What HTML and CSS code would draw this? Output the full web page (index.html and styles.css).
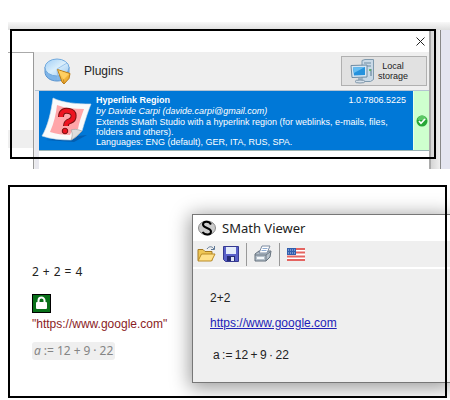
FILE: index.html
```html
<!DOCTYPE html>
<html lang="en">
<head>
    <meta charset="UTF-8">
    <meta name="viewport" content="width=device-width, initial-scale=1.0">
    <title>Hyperlink Region - SMath Studio</title>
    <link rel="stylesheet" href="styles.css">
</head>
<body>
    <!-- Plugins manager -->
    <section class="plugins">
        <div class="plugins-shadow"></div>
        <div class="plugins-body">
            <div class="manager">
                <div class="manager-title">
                    <button class="close" type="button" aria-label="Close">
                        <svg width="9" height="9" viewBox="0 0 9 9"><path d="M.5.5l8 8M8.5.5l-8 8" stroke="#222" fill="none"/></svg>
                    </button>
                </div>
                <div class="manager-main">
                    <div class="sidebar"><div class="sidebar-item"></div></div>
                    <div class="content">
                        <header class="content-header">
                            <svg class="pie" width="27" height="27" viewBox="0 0 27 27">
                                <defs>
                                    <linearGradient id="disc" x1="0" y1="0" x2="1" y2="1">
                                        <stop offset="0" stop-color="#9fcdf5"/><stop offset=".5" stop-color="#d9eefc"/><stop offset="1" stop-color="#9cc8f0"/>
                                    </linearGradient>
                                    <linearGradient id="slice" x1="0" y1="0" x2="1" y2="1">
                                        <stop offset="0" stop-color="#ffe07a"/><stop offset="1" stop-color="#e99a18"/>
                                    </linearGradient>
                                </defs>
                                <path d="M1 9v5c0 5 5 9 12 9s12-4 12-9V9z" fill="#7db4e8" stroke="#5a94cf"/>
                                <ellipse cx="13" cy="9.500" rx="12" ry="8.500" fill="url(#disc)" stroke="#72aade"/>
                                <path d="M13 11L23 5M13 11l1 11" stroke="#8fbde8" stroke-width=".8"/>
                                <path d="M13.500 11.500l12.500 4-1 5-5 5.500-2-2z" fill="url(#slice)" stroke="#b97b17"/>
                                <path d="M14.500 12.500l10.500 3.500-5.500 5.500z" fill="#ffcf62"/>
                                <path d="M19.500 21.500l.5 4" stroke="#b97b17" stroke-width=".8"/>
                            </svg>
                            <h1>Plugins</h1>
                            <button class="storage" type="button">
                                <svg width="25" height="25" viewBox="0 0 25 25">
                                    <path d="M12 1.500l3-1h8.500v20l-3 2H12z" fill="#c9d9e6" stroke="#7f9aae"/>
                                    <path d="M14 4h7M14 7h7" stroke="#6f8ca3"/>
                                    <path d="M20 10h2v7h-2z" fill="#8fa8ba"/>
                                    <circle cx="20" cy="11" r="1" fill="#4db34d"/>
                                    <path d="M1 6.500l16-.5v12L2 18.500z" fill="#d7e6f2" stroke="#6d8ba3"/>
                                    <path d="M3 8.500l12-.5v8l-11 .5z" fill="#2592dd"/>
                                    <path d="M3 8.500l12-.5-11 6z" fill="#66bdf1"/>
                                    <path d="M8 19h4v3H8z" fill="#9cb1c2"/>
                                    <ellipse cx="10" cy="22.500" rx="5" ry="1.500" fill="#d5e1eb" stroke="#8096a8"/>
                                </svg>
                                <span>Local<br>storage</span>
                            </button>
                        </header>
                        <article class="plugin">
                            <div class="plugin-info">
                                <svg class="plugin-icon" width="52" height="46" viewBox="0 0 52 46">
                                    <path d="M5 43l28 2 13-7-9 1z" fill="#06448a" opacity=".5"/>
                                    <path d="M12 1c10 5 24 6 38 6-4 10-7 20-9 27-4 4-7 7-11 9-10 0-20-1-29-4C7 29 10 15 12 1z" fill="#fafafa" stroke="#cfdbe5" stroke-width=".6"/>
                                    <path d="M16 8c8 3 17 4 27 4-3 8-5 14-6 20-4 0-7 3-8 6-7 0-14-1-20-3 4-9 6-18 7-27z" fill="#ffa6a9"/>
                                    <path d="M41 34c-5-2-8-2-11-1 2 4 1 7 0 10 4-2 7-5 11-9z" fill="#dcdcdc" stroke="#999" stroke-width=".6"/>
                                    <path d="M20 20c0-6 4-7 8-6 6 1 6 8 1 10-3 1-4 2-4 5" fill="none" stroke="#711" stroke-width="6"/>
                                    <path d="M20 20c0-6 4-7 8-6 6 1 6 8 1 10-3 1-4 2-4 5" fill="none" stroke="#ed1420" stroke-width="4"/>
                                    <circle cx="24" cy="34" r="2.800" fill="#ed1420" stroke="#711"/>
                                </svg>
                                <div class="plugin-text">
                                    <div class="plugin-heading">
                                        <h2>Hyperlink Region</h2>
                                        <span>1.0.7806.5225</span>
                                    </div>
                                    <p class="author">by Davide Carpi (davide.carpi@gmail.com)</p>
                                    <p>Extends SMath Studio with a hyperlink region (for weblinks, e-mails, files,<br>folders and others).</p>
                                    <p>Languages: ENG (default), GER, ITA, RUS, SPA.</p>
                                </div>
                            </div>
                            <div class="plugin-state">
                                <svg width="12" height="12" viewBox="0 0 12 12">
                                    <circle cx="6" cy="6" r="5.500" fill="#27a737"/>
                                    <path d="M1.500 5a4.500 4.500 0 0 1 9 0z" fill="#5cc766"/>
                                    <path d="M3 6l2 2.300L9 4" fill="none" stroke="#fff" stroke-width="1.700"/>
                                </svg>
                            </div>
                        </article>
                    </div>
                </div>
            </div>
            <div class="backdrop"></div>
        </div>
        <div class="frame frame-plugins"></div>
    </section>

    <!-- Worksheet and viewer -->
    <section class="sheets">
        <div class="worksheet">
            <p>2&#8196;+&#8196;2&#8196;=&#8196;4</p>
            <svg class="lock" width="19" height="19" viewBox="0 0 19 19">
                <rect x=".5" y=".5" width="18" height="18" fill="#087019" stroke="#000"/>
                <path d="M6.500 9V6.500a3 3 0 0 1 6 0V9" fill="none" stroke="#fff" stroke-width="2"/>
                <rect x="4" y="8" width="11" height="7" rx="1" fill="#fff"/>
            </svg>
            <p class="string">"https://www.google.com"</p>
            <p class="disabled"><i>a</i>&#8197;:=&#8197;12&#8197;+&#8197;9&#8197;·&#8197;22</p>
        </div>
        <div class="viewer">
            <header class="viewer-title">
                <svg width="18" height="18" viewBox="0 0 18 18">
                    <ellipse cx="9" cy="9" rx="8.500" ry="7" fill="#ccc" stroke="#888"/>
                    <path d="M13 5.500C11 1.500 5 2 5 5.500c0 4 8 3 8 7 0 4-6 4-8.500 .5" fill="none" stroke="#000" stroke-width="2"/>
                </svg>
                <h2>SMath Viewer</h2>
            </header>
            <div class="toolbar">
                <button type="button" aria-label="Open">
                    <svg width="19" height="18" viewBox="0 0 19 18">
                        <path d="M1 15.500v-11h5l2 2h7v9z" fill="#efc756" stroke="#a57b24"/>
                        <path d="M1 16l3.500-7H18l-3.500 7z" fill="#ffe18a" stroke="#b98b26"/>
                        <path d="M10 4c2-3 5-3 7 0M17.500 1v3.500H14" fill="none" stroke="#5f7896"/>
                    </svg>
                </button>
                <button type="button" aria-label="Save">
                    <svg width="16" height="16" viewBox="0 0 16 16">
                        <path d="M.5.5h15v15h-13l-2-2z" fill="#5960c8" stroke="#363a91"/>
                        <path d="M3 1h10v7H3z" fill="#e4ecfa"/>
                        <path d="M4 10h8v5H4z" fill="#252b75"/>
                        <path d="M8 11h3v4H8z" fill="#dfe5f5"/>
                    </svg>
                </button>
                <span class="separator"></span>
                <button type="button" aria-label="Print">
                    <svg width="18" height="18" viewBox="0 0 18 18">
                        <path d="M1 9l4-3h12l-1 6-4 4H1z" fill="#b6c1cb" stroke="#65717d"/>
                        <path d="M5 8l3-7h8l-3 7z" fill="#fff" stroke="#7c8ba0"/>
                        <path d="M8.500 3.500h5M7.500 5.500h5" stroke="#8eabd2"/>
                        <path d="M1 10h11l4-3M12 10v6" fill="none" stroke="#6b7783"/>
                        <path d="M3 13h7" stroke="#f4f7fa" stroke-width="2"/>
                    </svg>
                </button>
                <span class="separator"></span>
                <button type="button" aria-label="Language">
                    <svg width="18" height="13" viewBox="0 0 18 13">
                        <path d="M0 0h18v13H0z" fill="#fff"/>
                        <path d="M0 1h18M0 4.500h18M0 8.500h18M0 12h18" stroke="#e46461" stroke-width="2"/>
                        <path d="M0 0h9v7H0z" fill="#315fae"/>
                        <path d="M1 2h8M1 5h8" stroke="#b9cdf0" stroke-dasharray="1 1"/>
                    </svg>
                </button>
            </div>
            <div class="viewer-page">
                <p>2+2</p>
                <a href="https://www.google.com">https://www.google.com</a>
                <p class="formula">a&#8201;:=&#8201;12&#8201;+&#8201;9&#8201;·&#8201;22</p>
            </div>
        </div>
        <div class="frame frame-sheets"></div>
    </section>
</body>
</html>
```
FILE: styles.css
```css
* {
    box-sizing: border-box;
}

body {
    margin: 0;
    padding: 22px 0 0 8px;
    background-color: #fff;
    color: #222;
    font-family: "Liberation Sans", Arial, sans-serif;
    font-size: 12px;
    overflow-x: hidden;
}

h1, h2, p {
    margin: 0;
    font-weight: normal;
}

button {
    padding: 0;
    border: none;
    background: none;
    font-family: inherit;
    color: inherit;
}

svg {
    display: block;
    flex-shrink: 0;
}

.frame {
    position: absolute;
    border: 2px solid #000;
    pointer-events: none;
}

/* Plugins manager */
.plugins {
    position: relative;
    display: grid;
    grid-template-columns: 1fr;
}

.plugins-shadow {
    height: 8px;
    background: linear-gradient(#f8f8f8, #dedede);
}

.plugins-body {
    display: flex;
}

.manager {
    flex: 1;
    border-right: 2px solid #aaa;
}

.manager-title {
    display: flex;
    justify-content: flex-end;
    align-items: center;
    height: 22px;
    padding-right: 4px;
    background-color: #fff;
}

.manager-main {
    display: flex;
    height: 117px;
}

.sidebar {
    width: 26px;
    padding-top: 77px;
    border-top: 1px solid #aaa;
    border-right: 1px solid #999;
}

.sidebar-item {
    height: 18px;
    background-color: #efefef;
}

.content {
    flex: 1;
    padding-left: 4px;
    background: linear-gradient(90deg, #e8e8ee 4px, #fff 4px);
    border-left: 1px solid #eee;
}

.content-header {
    display: flex;
    align-items: center;
    height: 39px;
    margin-left: -4px;
    padding: 0 2px 0 9px;
    background-color: #efefef;
    border-bottom: 1px solid #b5c4d2;
}

.content-header h1 {
    flex: 1;
    padding-left: 13px;
    font-size: 12px;
}

.storage {
    display: flex;
    align-items: center;
    gap: 3px;
    width: 86px;
    height: 30px;
    padding-left: 8px;
    background-color: #e1e1e1;
    border: 1px solid #b0b0b0;
    font-size: 9px;
    line-height: 10px;
}

.storage span {
    flex-shrink: 0;
}

.plugin {
    display: flex;
    height: 60px;
    border-bottom: 1px solid #9ab5b5;
}

.plugin-info {
    display: flex;
    flex: 1;
    gap: 3px;
    padding: 4px 7px 0 2px;
    background-color: #0078d7;
    color: #fff;
    font-size: 9px;
    line-height: 10px;
}

.plugin-icon {
    margin-top: 2px;
}

.plugin-text {
    flex: 1;
    white-space: nowrap;
}

.plugin-heading {
    display: flex;
    justify-content: space-between;
}

.plugin-heading h2 {
    font-size: 9px;
    font-weight: bold;
}

.author {
    padding: 1px 0;
    font-style: italic;
}

.plugin-state {
    display: flex;
    justify-content: center;
    align-items: center;
    width: 16px;
    background-color: #ceffce;
    border-left: 1px solid #e8ffe8;
}

.backdrop {
    width: 19px;
    background: linear-gradient(90deg, #d5d5d5, #efefef 9px, #888 9px, #888 10px, #e4e5f0 10px);
}

.frame-plugins {
    top: 7px;
    right: 14px;
    bottom: 10px;
    left: 2px;
}

/* Worksheet and viewer */
.sheets {
    position: relative;
    display: flex;
    align-items: flex-start;
    margin-top: 16px;
    padding: 29px 0 15px 24px;
    overflow: hidden;
}

.frame-sheets {
    top: 0;
    right: 3px;
    bottom: 0;
    left: 0;
}

.worksheet {
    width: 160px;
    padding-top: 49px;
    line-height: 18px;
    font-family: "Noto Sans", sans-serif;
}

.lock {
    margin: 13px 0 0;
}

.string {
    padding-top: 2px;
    color: #8a1c24;
    font-family: "Liberation Sans", Arial, sans-serif;
}

.disabled {
    width: fit-content;
    margin-top: 9px;
    padding: 0 2px;
    background-color: #efefef;
    border-radius: 3px;
    color: #858585;
}

.viewer {
    flex: 1;
    background-color: #efefef;
    border: 1px solid #777;
    border-right: none;
    box-shadow: 0 3px 18px 2px rgba(0, 0, 0, 0.4);
}

.viewer-title {
    display: flex;
    align-items: center;
    gap: 6px;
    height: 26px;
    padding-left: 5px;
    background-color: #fff;
}

.viewer-title h2 {
    font-family: "Noto Sans", sans-serif;
    font-size: 13px;
}

.toolbar {
    display: flex;
    align-items: center;
    gap: 7px;
    height: 28px;
    padding-left: 4px;
    border-bottom: 2px solid #fff;
}

.separator {
    width: 1px;
    height: 23px;
    background-color: #999;
}

.viewer-page {
    height: 113px;
    padding: 20px 0 0 17px;
    line-height: 18px;
}

.viewer-page a {
    display: block;
    width: fit-content;
    margin-top: 7px;
    color: #2222b8;
}

.formula {
    padding: 14px 0 0 3px;
}
```
